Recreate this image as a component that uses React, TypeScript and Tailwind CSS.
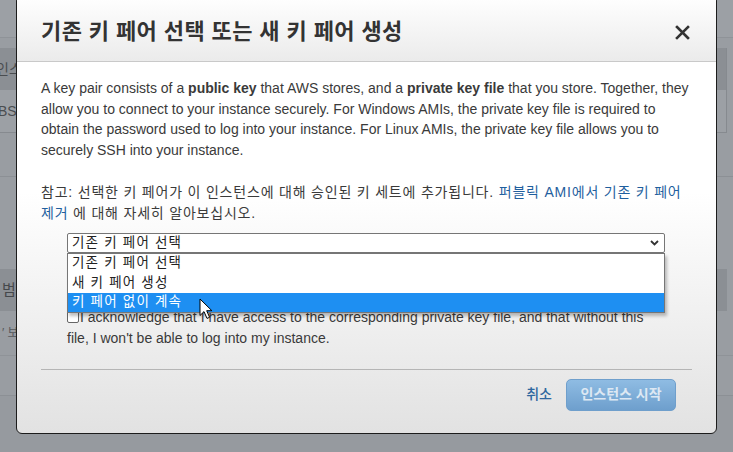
import React from "react";

const font = { fontFamily: "'Liberation Sans', 'Noto Sans CJK KR', Arial, sans-serif" };

function Background() {
  return (
    <div className="absolute inset-0 flex flex-col bg-[#999da2]">
      <div className="h-[38px] shrink-0 bg-[#9ca0a5] border-b border-[#8f9398]" />
      <div className="h-[10px] shrink-0" />
      <div className="w-[727px] shrink-0 flex flex-col border-r border-[#868a8f]">
        <div className="h-[42px] bg-[#8b8f94] flex items-center text-[14px] text-[#4a4d50] -ml-[4px]">인스</div>
        <div className="h-[43px] bg-[#9ca0a5] border-b border-[#868a8f] flex items-center text-[14px] text-[#4a4d50] -ml-[2px]">BS</div>
      </div>
      <div className="h-[44px] shrink-0 border-b border-[#8c9095]" />
      <div className="h-[92px] shrink-0" />
      <div className="w-[727px] h-[42px] shrink-0 bg-[#8b8f94] flex items-center pl-[2px] text-[15px] text-[#45484b]">범</div>
      <div className="h-[45px] shrink-0 border-b border-[#8f9398] flex items-center pl-[2px] text-[12px] text-[#55585b]">′ 보</div>
      <div className="h-[40px] shrink-0 border-b border-[#8c9095]" />
      <div className="flex-1 bg-[#969a9f]" />
    </div>
  );
}

function Cursor() {
  return (
    <svg className="absolute z-30 left-[199px] top-[298px]" width="14" height="22" viewBox="0 0 14 22">
      <path d="M1 1 L1 17.5 L5 13.6 L8 20.4 L10.6 19.3 L7.7 12.7 L12.9 12.7 Z" fill="#fff" stroke="#000" strokeWidth="1" strokeLinejoin="round" />
    </svg>
  );
}

export default function App() {
  return (
    <div className="relative w-[733px] h-[452px] overflow-hidden" style={font}>
      <Background />
      <div className="absolute left-[16px] top-[-5px] w-[701px] h-[439px] rounded-[6px] border border-[#1c1c1c] flex flex-col overflow-hidden bg-gradient-to-b from-white from-45% to-[#e2e2e2]">
        <div className="h-[66px] shrink-0 flex items-center justify-between pl-[24px] pr-[26px] pt-[6px] border-b border-[#c9c9c9] bg-gradient-to-b from-white to-[#ebebeb]">
          <div className="text-[22px] font-bold text-[#333] tracking-[0.4px]">기존 키 페어 선택 또는 새 키 페어 생성</div>
          <svg width="15" height="15" viewBox="0 0 15 15" className="mt-[1px]">
            <path d="M2 2 L13 13 M13 2 L2 13" stroke="#333" strokeWidth="2.6" strokeLinecap="square" />
          </svg>
        </div>
        <div className="flex flex-col px-[24px] pt-[16px] text-[#3a3a3a]">
          <p className="text-[14px] leading-[20.7px] tracking-[0px]">
            A key pair consists of a <b>public key</b> that AWS stores, and a <b>private key file</b> that you store. Together, they
            <br />
            allow you to connect to your instance securely. For Windows AMIs, the private key file is required to
            <br />
            obtain the password used to log into your instance. For Linux AMIs, the private key file allows you to
            <br />
            securely SSH into your instance.
          </p>
          <p className="mt-[21px] text-[14px] leading-[21px] tracking-[0.8px]">
            참고: 선택한 키 페어가 이 인스턴스에 대해 승인된 키 세트에 추가됩니다.{" "}
            <span className="text-[#1f5f9e]">퍼블릭 AMI에서 기존 키 페어</span>
            <br />
            <span className="text-[#1f5f9e]">제거</span> 에 대해 자세히 알아보십시오.
          </p>
          <div className="relative ml-[26px] mr-[27px] mt-[9px]">
            <div className="h-[20px] border border-[#767676] rounded-[2px] bg-white flex items-center justify-between pl-[4px] pr-[5px] text-[13.5px] tracking-[1.2px] text-[#222]">
              <span>기존 키 페어 선택</span>
              <svg width="9" height="6" viewBox="0 0 9 6">
                <path d="M1 1 L4.5 4.5 L8 1" fill="none" stroke="#333" strokeWidth="1.8" />
              </svg>
            </div>
            <div className="absolute left-0 right-0 top-[20px] z-10 bg-white border border-[#767676] shadow-[2px_3px_3px_rgba(0,0,0,0.25)] flex flex-col text-[13.5px] tracking-[1.2px] text-[#222]">
              <div className="h-[19.5px] pl-[4px] flex items-center">기존 키 페어 선택</div>
              <div className="h-[19.5px] pl-[4px] flex items-center">새 키 페어 생성</div>
              <div className="h-[19.5px] pl-[4px] flex items-center bg-[#1e8ff2] text-white">키 페어 없이 계속</div>
            </div>
            <div className="mt-[54px] text-[14px] leading-[21px] tracking-[0px] text-[#3a3a3a]">
              <span className="inline-block align-[-1px] w-[12px] h-[12px] border border-[#666] rounded-[2px] bg-white mr-[1px]" />
              I acknowledge that I have access to the corresponding private key file, and that without this
              <br />
              file, I won't be able to log into my instance.
            </div>
          </div>
          <div className="mt-[20px] border-t border-[#b5b5b5]" />
          <div className="mt-[9px] flex items-center justify-end gap-[14px] pr-[16px]">
            <span className="text-[14px] font-medium text-[#2f679f]">취소</span>
            <div className="w-[110px] h-[32px] rounded-[5px] border border-[#6f9fcc] bg-gradient-to-b from-[#8fbce3] to-[#6e9fcd] flex items-center justify-center text-[14px] font-bold text-[#dde8f3]">
              인스턴스 시작
            </div>
          </div>
        </div>
      </div>
      <Cursor />
    </div>
  );
}
